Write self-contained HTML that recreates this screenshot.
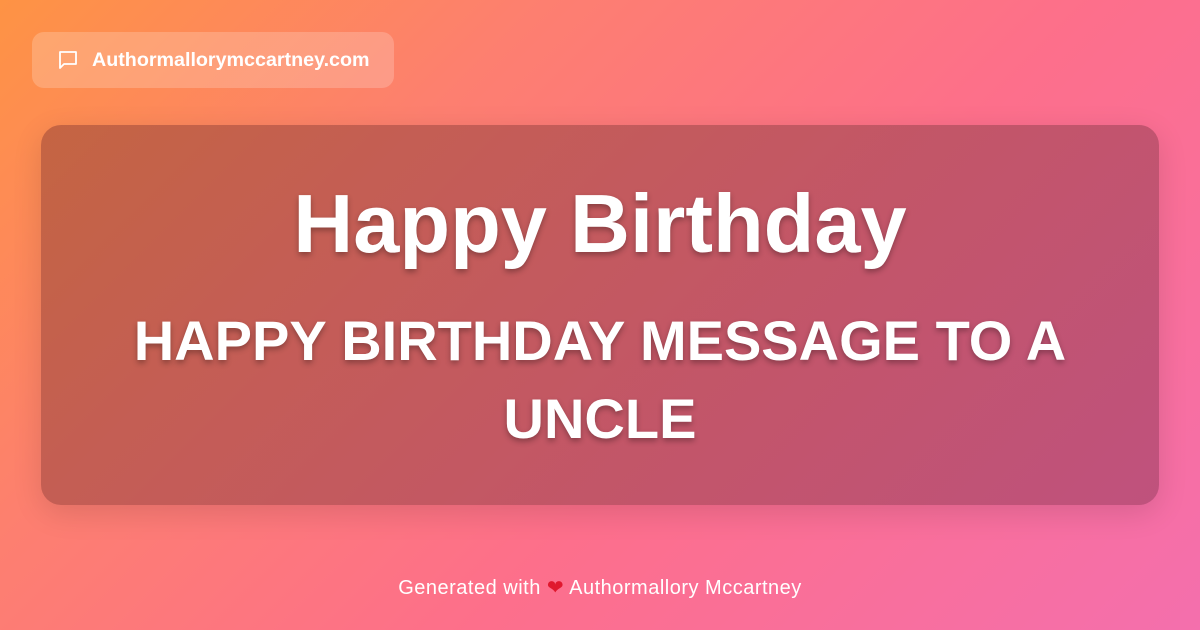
<!DOCTYPE html>
<html><head><meta charset="utf-8"><style>
html,body{margin:0;padding:0}
body{width:1200px;height:630px;overflow:hidden;position:relative;font-family:"Liberation Sans",sans-serif;
background:linear-gradient(135deg,#fe9344 0%,#fd7f70 30%,#fd6f8b 60%,#f46fad 100%);}
.pill{position:absolute;left:32px;top:32px;width:362px;height:56px;border-radius:12px;background:rgba(255,255,255,0.2);}
.pill svg{position:absolute;left:26px;top:18px}
.pill span{position:absolute;left:60px;top:17px;font-size:19.7px;font-weight:bold;color:#fff;}
.card{position:absolute;left:41px;top:125px;width:1118px;height:380px;border-radius:20px;
background:linear-gradient(135deg,rgba(175,85,60,0.72),rgba(170,70,110,0.72));box-shadow:0 8px 30px rgba(0,0,0,0.12);}
h1{position:absolute;left:0;right:0;top:182px;margin:0;text-align:center;font-size:83px;font-weight:bold;color:#fff;text-shadow:0 3px 6px rgba(0,0,0,0.3);line-height:84px}
h2{position:absolute;left:60px;right:60px;top:302px;margin:0;text-align:center;font-size:56px;font-weight:bold;color:#fff;text-shadow:0 3px 6px rgba(0,0,0,0.3);line-height:78px}
.foot{position:absolute;left:0;right:0;top:575px;text-align:center;font-size:20px;letter-spacing:0.5px;color:#fff;}
</style></head><body>
<div class="pill"><svg width="20" height="20" viewBox="0 0 20 20" fill="none" stroke="#fff" stroke-width="1.8" stroke-linejoin="round"><path d="M2 2h16v12H6l-4 4z"/></svg><span>Authormallorymccartney.com</span></div>
<div class="card"></div>
<h1>Happy Birthday</h1>
<h2>HAPPY BIRTHDAY MESSAGE TO A UNCLE</h2>
<div class="foot">Generated with <span style="color:#e0182e">❤</span> Authormallory Mccartney</div>
</body></html>
